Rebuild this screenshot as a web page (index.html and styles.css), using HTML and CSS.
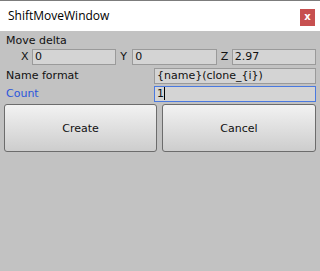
FILE: index.html
```html
<!DOCTYPE html>
<html>
<head>
<meta charset="utf-8">
<link rel="stylesheet" href="styles.css">
</head>
<body>
<div class="window">
  <div class="titlebar">
    <span class="title">ShiftMoveWindow</span>
    <span class="close">x</span>
  </div>
  <div class="content">
    <div class="label-row">Move delta</div>
    <div class="vector-row">
      <span class="axis">X</span><span class="field">0</span>
      <span class="axis">Y</span><span class="field">0</span>
      <span class="axis">Z</span><span class="field">2.97</span>
    </div>
    <div class="prop-row">
      <span class="prop-label">Name format</span>
      <span class="field wide">{name}(clone_{i})</span>
    </div>
    <div class="prop-row">
      <span class="prop-label focused">Count</span>
      <span class="field wide active">1<span class="caret"></span></span>
    </div>
    <div class="buttons">
      <div class="button">Create</div>
      <div class="button">Cancel</div>
    </div>
  </div>
</div>
</body>
</html>
```
FILE: styles.css
```css
html, body {
  margin: 0;
  padding: 0;
  background: #c2c2c2;
}
.window {
  width: 320px;
  height: 271px;
  background: #c2c2c2;
  font-family: "DejaVu Sans", sans-serif;
  font-size: 11px;
  color: #111;
}
.titlebar {
  height: 30px;
  border-top: 1px solid #7c7c7c;
  background: #ffffff;
  display: flex;
  align-items: center;
  justify-content: space-between;
  padding: 0 5px 0 8px;
  box-sizing: content-box;
}
.title {
  font-family: "Open Sans", "Noto Sans", sans-serif;
  font-size: 12px;
  color: #000;
  margin-top: -1px;
}
.close {
  width: 15px;
  height: 17px;
  background: #c75050;
  color: #fff;
  font-family: "DejaVu Sans", sans-serif;
  font-weight: bold;
  font-size: 10px;
  line-height: 16px;
  text-align: center;
  margin-top: 2px;
}
.content {
  padding: 2px 4px 0 6px;
  display: flex;
  flex-direction: column;
}
.label-row {
  height: 16px;
  line-height: 16px;
}
.vector-row {
  display: grid;
  grid-template-columns: 15px 1fr 16px 1fr 15px 1fr;
  margin-left: 11px;
  height: 16px;
  margin-top: 0;
}
.axis {
  line-height: 16px;
  padding-left: 4px;
}
.field {
  height: 16px;
  box-sizing: border-box;
  background: #d4d4d4;
  border: 1px solid #9a9a9a;
  line-height: 14px;
  padding-left: 2px;
  color: #111;
  white-space: nowrap;
  overflow: hidden;
}
.prop-row {
  display: grid;
  grid-template-columns: 148px 1fr;
  margin-top: 2px;
  height: 16px;
}
.vector-row + .prop-row {
  margin-top: 3px;
}
.prop-label {
  line-height: 16px;
}
.prop-label.focused {
  color: #2a56dc;
}
.field.active {
  border-color: #4a79e0;
}
.caret {
  display: inline-block;
  width: 1px;
  height: 13px;
  background: #000;
  vertical-align: -3px;
  margin-left: 0;
}
.buttons {
  display: grid;
  grid-template-columns: 153px 154px;
  column-gap: 5px;
  margin-top: 2px;
  margin-left: -2px;
}
.button {
  height: 48px;
  box-sizing: border-box;
  border: 1px solid #6c6c6c;
  border-radius: 3px;
  background: linear-gradient(#f2f2f2, #cdcdcd);
  display: flex;
  align-items: center;
  justify-content: center;
  color: #111;
}
```
